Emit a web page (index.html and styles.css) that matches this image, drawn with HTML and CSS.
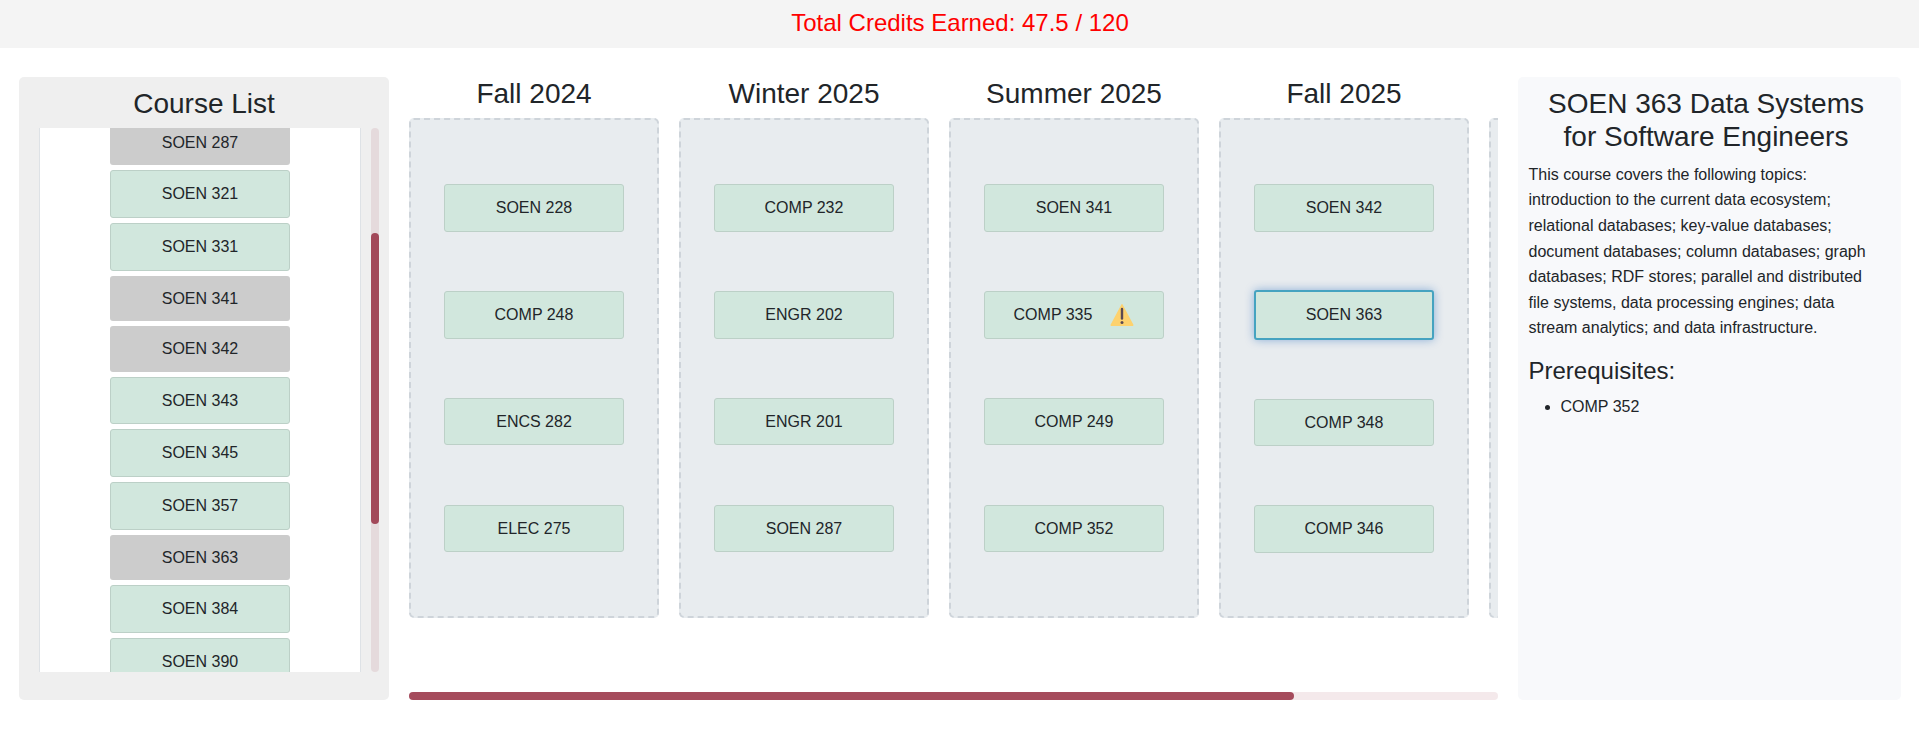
FILE: index.html
```
<!DOCTYPE html>
<html lang="en">
<head>
<meta charset="utf-8">
<title>Course Sequence</title>
<link rel="stylesheet" href="styles.css">
</head>
<body>
<header class="credits"><h4>Total Credits Earned: 47.5 / 120</h4></header>
<main class="planner">
  <aside class="course-list">
    <h3>Course List</h3>
    <div class="list-body">
      <div class="list-viewport">
        <div class="list-items">
          <div class="course disabled">SOEN 287</div>
          <div class="course">SOEN 321</div>
          <div class="course">SOEN 331</div>
          <div class="course disabled">SOEN 341</div>
          <div class="course disabled">SOEN 342</div>
          <div class="course">SOEN 343</div>
          <div class="course">SOEN 345</div>
          <div class="course">SOEN 357</div>
          <div class="course disabled">SOEN 363</div>
          <div class="course">SOEN 384</div>
          <div class="course">SOEN 390</div>
        </div>
      </div>
      <div class="track vertical"><div class="thumb"></div></div>
    </div>
  </aside>
  <section class="semesters">
    <div class="semester-row">
      <div class="semester">
        <h3>Fall 2024</h3>
        <div class="term">
          <div class="course">SOEN 228</div>
          <div class="course">COMP 248</div>
          <div class="course">ENCS 282</div>
          <div class="course">ELEC 275</div>
        </div>
      </div>
      <div class="semester">
        <h3>Winter 2025</h3>
        <div class="term">
          <div class="course">COMP 232</div>
          <div class="course">ENGR 202</div>
          <div class="course">ENGR 201</div>
          <div class="course">SOEN 287</div>
        </div>
      </div>
      <div class="semester">
        <h3>Summer 2025</h3>
        <div class="term">
          <div class="course">SOEN 341</div>
          <div class="course flagged"><span>COMP 335</span>
            <svg class="warning" viewBox="0 0 24 24" width="24" height="24"><path d="M12 1.8 22.8 22.2H1.2Z" fill="#fdd26e" stroke="#fdd26e" stroke-width="1.4" stroke-linejoin="round"/><path d="M12 6v9.6" stroke="#5b4a52" stroke-width="2.4" stroke-linecap="round"/><circle cx="12" cy="19.4" r="1.5" fill="#5b4a52"/></svg>
          </div>
          <div class="course">COMP 249</div>
          <div class="course">COMP 352</div>
        </div>
      </div>
      <div class="semester">
        <h3>Fall 2025</h3>
        <div class="term">
          <div class="course">SOEN 342</div>
          <div class="course selected">SOEN 363</div>
          <div class="course">COMP 348</div>
          <div class="course">COMP 346</div>
        </div>
      </div>
      <div class="semester">
        <h3>&nbsp;</h3>
        <div class="term"></div>
      </div>
    </div>
    <div class="track horizontal"><div class="thumb"></div></div>
  </section>
  <aside class="details">
    <h3>SOEN 363 Data Systems for Software Engineers</h3>
    <p>This course covers the following topics: introduction to the current data ecosystem; relational databases; key-value databases; document databases; column databases; graph databases; RDF stores; parallel and distributed file systems, data processing engines; data stream analytics; and data infrastructure.</p>
    <h4>Prerequisites:</h4>
    <ul><li>COMP 352</li></ul>
  </aside>
</main>
</body>
</html>
```
FILE: styles.css
```
* { box-sizing: border-box; }

body {
  margin: 0;
  height: 744px;
  overflow: hidden;
  background: #fff;
  color: #212529;
  font: 16px/1.6 "Liberation Sans", Arial, sans-serif;
}

h3, h4 { margin: 0 0 8px; font-weight: 500; line-height: 1.2; }
h3 { font-size: 28px; text-align: center; }
h4 { font-size: 24px; }

.credits {
  height: 48px;
  padding: 9px 0 0 1px;
  background: #f4f4f4;
  color: red;
  text-align: center;
}

.planner {
  display: flex;
  gap: 20px;
  height: 652px;
  padding: 28.7px 18px 0 19px;
}

.course-list {
  flex: 0 0 370px;
  padding: 10px 10px 28px 20px;
  border-radius: 5px;
  background: #efefef;
  display: flex;
  flex-direction: column;
}
.course-list h3 { padding-right: 10px; }

.list-body { flex: 1; min-height: 0; display: flex; justify-content: space-between; }
.list-viewport {
  width: 322px;
  overflow: hidden;
  background: #fff;
  border: solid #dee2e6;
  border-width: 0 1px;
}
.list-items {
  display: flex;
  flex-direction: column;
  align-items: center;
  gap: 5px;
  margin-top: -8.5px;
}

.course {
  flex: none;
  width: 180px;
  padding: 10px;
  border: 1px solid #bcd0c7;
  border-radius: 3px;
  background: #d1e7dd;
  text-align: center;
}
.course.disabled { border: 0; background: #ccc; }
.course.selected {
  border: 2px solid #45a3c0;
  box-shadow: 0 0 10px rgba(0, 86, 179, .4);
}
.course.flagged { display: flex; justify-content: center; align-items: center; gap: 18px; }
.warning { display: block; margin: -1px 0; }

.track { background: rgba(145, 35, 56, .1); border-radius: 4px; }
.thumb { background: rgba(145, 35, 56, .8); border-radius: 4px; }
.track.vertical { width: 8px; padding-top: 105px; }
.track.vertical .thumb { height: 291px; }
.track.horizontal { height: 8px; }
.track.horizontal .thumb { height: 8px; width: 885px; }

.semesters {
  flex: 1;
  min-width: 0;
  display: flex;
  flex-direction: column;
  justify-content: space-between;
}
.semester-row { display: flex; gap: 20px; overflow: hidden; }
.semester { flex: 0 0 250px; }
.term {
  height: 500px;
  padding: 10px;
  border: 2px dashed #ced4da;
  border-radius: 5px;
  background: #e8ecef;
  display: flex;
  flex-direction: column;
  align-items: center;
  justify-content: space-evenly;
}
.term .course { margin: 5px 0; }

.details {
  flex: 0 0 383px;
  padding: 10px 17.5px 10px 10.5px;
  border-radius: 5px;
  background: #f8f9fb;
}
.details p { margin: 0 0 16px; }
.details ul { margin: 0; padding-left: 32px; }
```
